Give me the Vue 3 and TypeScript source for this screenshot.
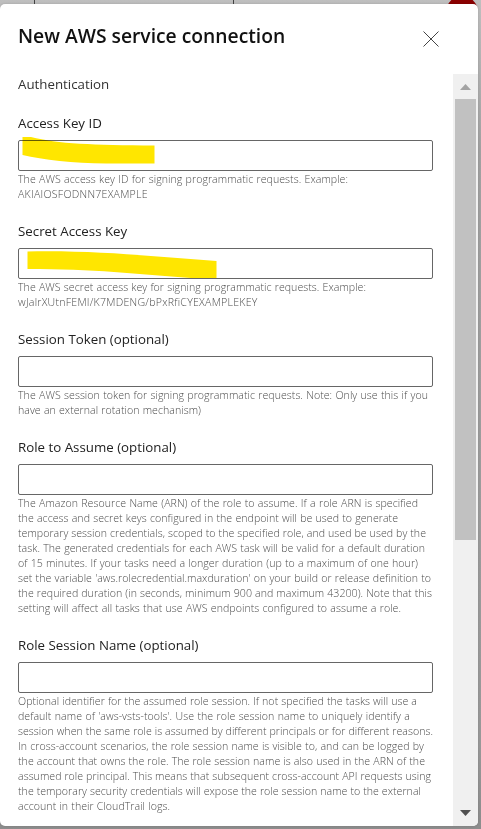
<script setup lang="ts">
interface HelpLine {
  text: string
  width: number
}

interface Field {
  label: string
  help: HelpLine[]
  mark?: string
}

const line = (text: string, width: number): HelpLine => ({ text, width })

const fields: Field[] = [
  {
    label: 'Access Key ID',
    help: [
      line('The AWS access key ID for signing programmatic requests. Example:', 330),
      line('AKIAIOSFODNN7EXAMPLE', 130),
    ],
    mark: 'M4.5 -3 H13 C40 4 75 5 136.5 5.5 V23.5 H88 C55 23 25 20 4.5 15 Z',
  },
  {
    label: 'Secret Access Key',
    help: [
      line('The AWS secret access key for signing programmatic requests. Example:', 348),
      line('wJalrXUtnFEMI/K7MDENG/bPxRfiCYEXAMPLEKEY', 239),
    ],
    mark: 'M9.5 3.5 C80 2 140 9 198.5 13 V30 H173 C120 26 75 21 9.5 21 Z',
  },
  {
    label: 'Session Token (optional)',
    help: [
      line('The AWS session token for signing programmatic requests. Note: Only use this if you', 410),
      line('have an external rotation mechanism)', 183),
    ],
  },
  {
    label: 'Role to Assume (optional)',
    help: [
      line('The Amazon Resource Name (ARN) of the role to assume. If a role ARN is specified', 400),
      line('the access and secret keys configured in the endpoint will be used to generate', 380),
      line('temporary session credentials, scoped to the specified role, and used be used by the', 408),
      line('task. The generated credentials for each AWS task will be valid for a default duration', 407),
      line('of 15 minutes. If your tasks need a longer duration (up to a maximum of one hour)', 400),
      line("set the variable 'aws.rolecredential.maxduration' on your build or release definition to", 413),
      line('the required duration (in seconds, minimum 900 and maximum 43200). Note that this', 414),
      line('setting will affect all tasks that use AWS endpoints configured to assume a role.', 383),
    ],
  },
  {
    label: 'Role Session Name (optional)',
    help: [
      line('Optional identifier for the assumed role session. If not specified the tasks will use a', 399),
      line("default name of 'aws-vsts-tools'. Use the role session name to uniquely identify a", 392),
      line('session when the same role is assumed by different principals or for different reasons.', 415),
      line('In cross-account scenarios, the role session name is visible to, and can be logged by', 406),
      line('the account that owns the role. The role session name is also used in the ARN of the', 407),
      line('assumed role principal. This means that subsequent cross-account API requests using', 413),
      line('the temporary security credentials will expose the role session name to the external', 403),
      line('account in their CloudTrail logs.', 152),
    ],
  },
]
</script>

<template>
  <div class="page">
    <i class="rule first"></i>
    <i class="rule second"></i>
    <i class="avatar"></i>
    <section class="dialog" role="dialog" aria-labelledby="title">
      <header class="header">
        <h1 id="title">New AWS service connection</h1>
        <button class="close" aria-label="Close">
          <svg width="16" height="16" viewBox="0 0 16 16"><path d="M.5 .5 15.5 15.5M15.5 .5 .5 15.5" /></svg>
        </button>
      </header>
      <div class="body">
        <main class="content">
          <h2>Authentication</h2>
          <div v-for="(f, i) in fields" :key="f.label" class="field">
            <label :for="'field-' + i">{{ f.label }}</label>
            <div class="control">
              <input :id="'field-' + i" type="text" />
              <svg v-if="f.mark" class="mark" width="415" height="31"><path :d="f.mark" /></svg>
            </div>
            <p>
              <span
                v-for="l in f.help"
                :key="l.text"
                :class="{ token: !l.text.includes(' ') }"
                :style="{ width: l.width + 'px' }"
              >{{ l.text }}</span>
            </p>
          </div>
        </main>
        <aside class="scrollbar">
          <svg class="up" width="25" height="25"><path d="M7 16 12.5 10 18 16Z" /></svg>
          <div class="thumb"></div>
          <svg class="down" width="25" height="25"><path d="M7 9 12.5 15 18 9Z" /></svg>
        </aside>
      </div>
    </section>
  </div>
</template>

<style>
body { overflow: hidden; }
</style>

<style scoped>
* { box-sizing: border-box; }
.page {
  position: relative;
  width: 481px;
  height: 829px;
  padding-top: 4px;
  overflow: hidden;
  background: linear-gradient(#bfbfbf, #a2a2a2 18%, #999 90%, #8d8d8d);
  font-family: "Open Sans", "Noto Sans", sans-serif;
}
.rule { position: absolute; top: 0; width: 1px; height: 4px; background: #454545; }
.first { left: 34px; }
.second { left: 233px; }
.avatar { position: absolute; left: 446px; top: -4px; width: 32px; height: 32px; border-radius: 50%; background: #8b0000; }
.dialog {
  position: relative;
  display: flex;
  flex-direction: column;
  width: 478px;
  height: 822px;
  overflow: hidden;
  border-radius: 5px;
  background: #fff;
  box-shadow: 0 0 3px rgba(0, 0, 0, .15);
}
.header { display: flex; justify-content: space-between; height: 70px; padding: 18px 39px 0 18px; }
h1 { margin: 0; font-size: 19.3px; line-height: 28px; font-weight: 600; color: #111; white-space: nowrap; }
.close { display: flex; width: 16px; height: 16px; margin-top: 9px; padding: 0; border: 0; background: none; }
.close path { fill: none; stroke: #444; stroke-width: 1; }
.body { display: flex; flex: 1; min-height: 0; }
.content { width: 453px; padding: 0 20px 0 18px; }
h2 { height: 20px; margin: 0; font-size: 13.3px; line-height: 20px; font-weight: 400; color: #333; }
.field { display: flex; flex-direction: column; }
label { height: 46px; padding-top: 19px; font-size: 13.3px; line-height: 20px; color: #222; white-space: nowrap; }
.control { position: relative; height: 31px; }
input { display: block; width: 415px; height: 31px; padding: 0 8px; border: 1px solid #666; border-radius: 2px; background: #fff; }
.mark { position: absolute; left: 0; top: 0; overflow: visible; mix-blend-mode: multiply; }
.mark path { fill: #ffe600; }
p { margin: 1px 0 0; color: #4c4c4c; font-size: 10.6px; line-height: 15px; font-weight: 300; letter-spacing: .04px; }
span { display: block; height: 15px; white-space: normal; text-align: justify; text-align-last: justify; }
.token { letter-spacing: .25px; text-align-last: left; }
.scrollbar { display: flex; flex-direction: column; width: 25px; background: #f0f0f0; }
.thumb { width: 21px; height: 441px; margin: 0 2px; background: #c1c1c1; }
.up path { fill: #a3a3a3; }
.down { margin-top: auto; }
.down path { fill: #505050; }
</style>
